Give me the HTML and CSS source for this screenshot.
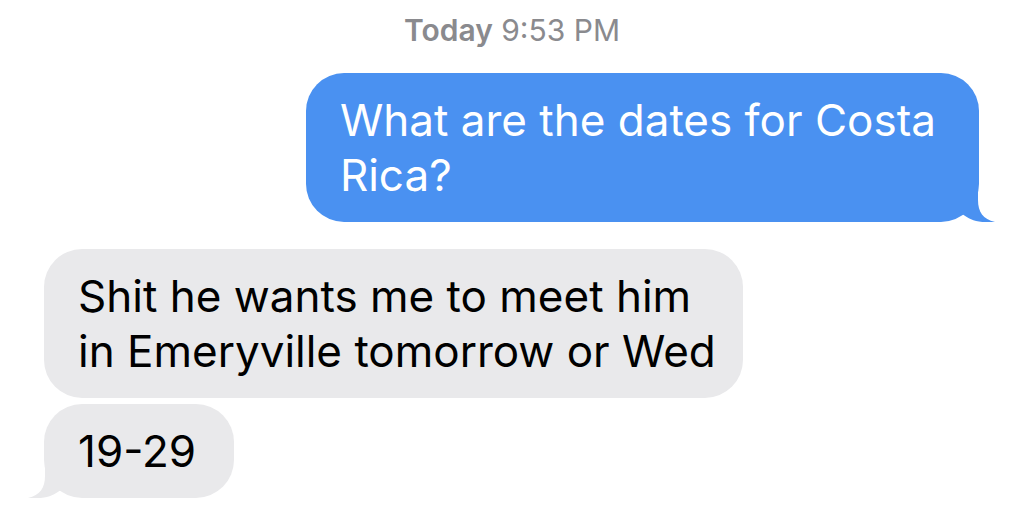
FILE: index.html
```html
<!DOCTYPE html>
<html lang="en">
<head>
<meta charset="utf-8">
<title>Messages</title>
<link rel="stylesheet" href="styles.css">
</head>
<body>
<main class="thread">
  <div class="stamp"><span class="stamp-day">Today</span> 9:53 PM</div>

  <div class="row row-sent">
    <div class="bubble bubble-sent">
      What are the dates for Costa<br>Rica?
      <svg class="tail tail-sent" viewBox="0 0 57 50" width="57" height="50" aria-hidden="true">
        <path d="M39 0 L39 28 C39 40 44 47 56 50 C50 50.6 44 50.2 40 49.6 C32 48.2 27 45 22 41 L8 28 Z"/>
      </svg>
    </div>
  </div>

  <div class="row row-recv">
    <div class="bubble bubble-recv bubble-long">Shit he wants me to meet him<br>in Emeryville tomorrow or Wed</div>
  </div>

  <div class="row row-recv row-tight">
    <div class="bubble bubble-recv bubble-short">
      19-29
      <svg class="tail tail-recv" viewBox="0 0 57 50" width="57" height="50" aria-hidden="true">
        <path d="M39 0 L39 28 C39 40 44 47 56 50 C50 50.6 44 50.2 40 49.6 C32 48.2 27 45 22 41 L8 28 Z"/>
      </svg>
    </div>
  </div>
</main>
</body>
</html>
```

FILE: styles.css
```css
html, body {
  margin: 0;
  padding: 0;
  background: #ffffff;
}

body {
  width: 1024px;
  height: 511px;
  overflow: hidden;
  font-family: Inter, "Noto Sans", "Liberation Sans", sans-serif;
}

.thread {
  display: flex;
  flex-direction: column;
}

.stamp {
  padding-top: 12px;
  height: 36px;
  line-height: 36px;
  font-size: 30px;
  color: #8a8a8e;
  text-align: center;
  font-weight: 400;
}

.stamp-day {
  font-weight: 600;
}

.row {
  display: flex;
}

.row-sent {
  justify-content: flex-end;
  padding-right: 45px;
  margin-top: 25px;
}

.row-recv {
  justify-content: flex-start;
  padding-left: 44px;
  margin-top: 27px;
}

.row-tight {
  margin-top: 6px;
}

.bubble {
  position: relative;
  box-sizing: border-box;
  padding: 20px 34px 19px 34px;
  border-radius: 38px;
  font-size: 44px;
  line-height: 55px;
  white-space: nowrap;
}

.bubble-sent {
  background: #4a91f1;
  color: #ffffff;
  padding-left: 34px;
  padding-right: 43px;
}

.bubble-recv {
  background: #e9e9eb;
  color: #000000;
}

.bubble-long {
  padding-right: 27px;
}

.bubble-short {
  padding-right: 38px;
}

.tail {
  position: absolute;
  bottom: 0;
  display: block;
}

.tail-sent {
  right: -17px;
  fill: #4a91f1;
}

.tail-recv {
  left: -17px;
  fill: #e9e9eb;
  transform: scaleX(-1);
}
```
